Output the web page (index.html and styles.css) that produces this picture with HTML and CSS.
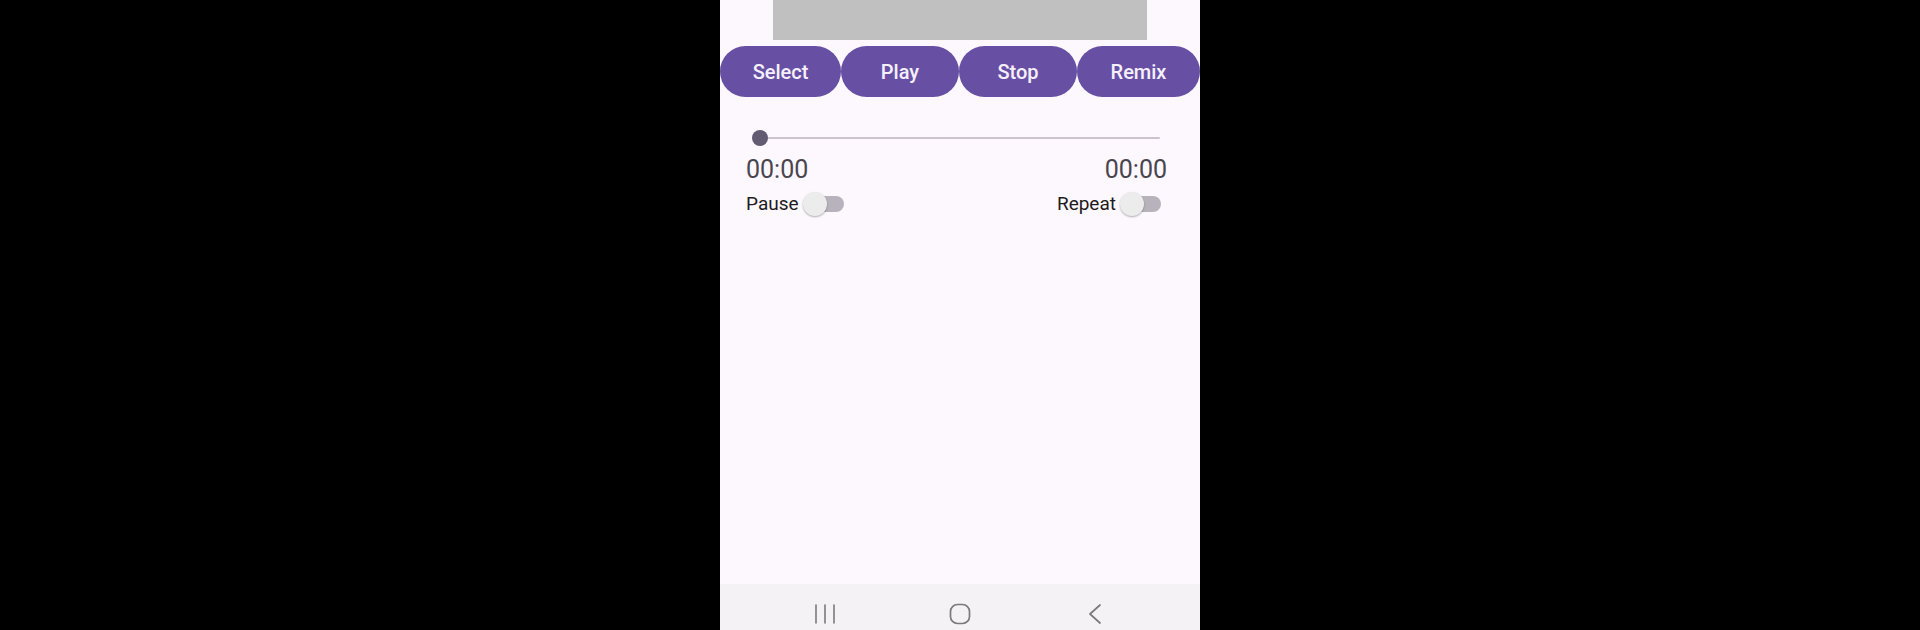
FILE: index.html
```html
<!DOCTYPE html>
<html>
<head>
<meta charset="utf-8">
<link rel="stylesheet" href="styles.css">
</head>
<body>
<div class="phone">
  <div class="banner"></div>
  <div class="buttons">
    <div class="btn">Select</div>
    <div class="btn">Play</div>
    <div class="btn">Stop</div>
    <div class="btn">Remix</div>
  </div>
  <div class="slider">
    <div class="track"></div>
    <div class="thumb"></div>
  </div>
  <div class="times">
    <span>00:00</span>
    <span>00:00</span>
  </div>
  <div class="toggles">
    <div class="toggle"><span class="label">Pause</span><span class="switch"><span class="sw-track"></span><span class="sw-thumb"></span></span></div>
    <div class="toggle"><span class="label">Repeat</span><span class="switch"><span class="sw-track"></span><span class="sw-thumb"></span></span></div>
  </div>
  <div class="spacer"></div>
  <div class="navbar">
    <div class="nav-item">
      <svg width="22" height="22" viewBox="0 0 22 22"><g stroke="#7a7a7a" stroke-width="1.6" stroke-linecap="round"><line x1="2" y1="2" x2="2" y2="20"/><line x1="11" y1="2" x2="11" y2="20"/><line x1="20" y1="2" x2="20" y2="20"/></g></svg>
    </div>
    <div class="nav-item">
      <svg width="22" height="22" viewBox="0 0 22 22"><rect x="1.5" y="1.5" width="19" height="19" rx="7" fill="none" stroke="#7a7a7a" stroke-width="1.7"/></svg>
    </div>
    <div class="nav-item">
      <svg width="14" height="22" viewBox="0 0 14 22"><polyline points="12,2 2,11 12,20" fill="none" stroke="#7a7a7a" stroke-width="1.7" stroke-linecap="round" stroke-linejoin="round"/></svg>
    </div>
  </div>
</div>
</body>
</html>
```
FILE: styles.css
```css
html, body {
  margin: 0;
  padding: 0;
  background: #000;
  height: 630px;
  overflow: hidden;
}
body {
  display: flex;
  justify-content: center;
  font-family: Roboto, "Noto Sans", sans-serif;
}
.phone {
  width: 480px;
  height: 630px;
  background: #fdf7fe;
  display: flex;
  flex-direction: column;
}
.banner {
  height: 40px;
  margin: 0 53px;
  background: #c0c0c0;
}
.buttons {
  margin-top: 6px;
  height: 51px;
  display: grid;
  grid-template-columns: 121px 118px 118px 123px;
}
.btn {
  background: #6750a4;
  color: #f6f0fc;
  border-radius: 26px;
  display: flex;
  align-items: center;
  justify-content: center;
  font-size: 20px;
  font-weight: 500;
  padding-top: 1px;
}
.slider {
  position: relative;
  margin: 25px 40px 0 40px;
  height: 32px;
}
.track {
  position: absolute;
  left: 0;
  right: 0;
  top: 15px;
  height: 2px;
  background: #cbc4d0;
  border-radius: 1px;
}
.thumb {
  position: absolute;
  left: -8px;
  top: 8px;
  width: 16px;
  height: 16px;
  border-radius: 50%;
  background: #625b71;
}
.times {
  margin-top: 1px;
  display: flex;
  justify-content: space-between;
  padding: 0 33px 0 26px;
  font-size: 25px;
  line-height: 30px;
  color: #49454f;
}
.toggles {
  margin-top: 5px;
  display: flex;
  justify-content: space-between;
  padding: 0 39px 0 26px;
  height: 28px;
}
.toggle {
  display: flex;
  align-items: center;
  gap: 4px;
}
.label {
  font-size: 19px;
  line-height: 28px;
  color: #1d1b20;
}
.switch {
  position: relative;
  width: 41px;
  height: 24px;
}
.sw-track {
  position: absolute;
  left: 6px;
  right: 0;
  top: 4px;
  height: 16px;
  border-radius: 8px;
  background: #b8b2bc;
}
.sw-thumb {
  position: absolute;
  left: 0;
  top: 0;
  width: 24px;
  height: 24px;
  border-radius: 50%;
  background: #ececec;
  box-shadow: 0 1px 2px rgba(0,0,0,0.3);
}
.spacer {
  flex: 1;
}
.navbar {
  height: 46px;
  background: #f4f2f5;
  display: grid;
  grid-template-columns: repeat(3, 135px);
  justify-content: center;
  align-items: start;
}
.nav-item {
  display: flex;
  justify-content: center;
  align-items: center;
  padding-top: 19px;
}
.nav-item svg {
  display: block;
}
```
